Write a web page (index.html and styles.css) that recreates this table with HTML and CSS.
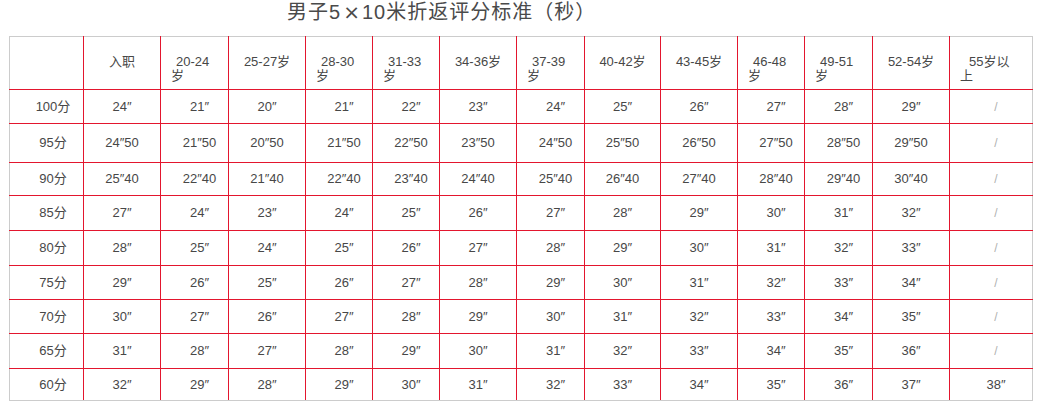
FILE: index.html
```html
<!DOCTYPE html>
<html lang="zh-CN">
<head>
<meta charset="utf-8">
<title>男子5×10米折返评分标准（秒）</title>
<link rel="stylesheet" href="styles.css">
</head>
<body>
<div class="page">
  <h1 class="title">男子5<span class="times">×</span>10米折返评分标准（秒）</h1>
  <table class="score">
    <colgroup>
      <col class="c74"><col class="c77"><col class="c68"><col class="c77"><col class="c67"><col class="c67"><col class="c77"><col class="c68"><col class="c76"><col class="c77"><col class="c67"><col class="c68"><col class="c77"><col class="c83">
    </colgroup>
    <thead>
      <tr class="hrow">
        <th class="lab"></th>
        <th>入职</th>
        <th class="w"><span class="ind">20-24</span><br>岁</th>
        <th>25-27岁</th>
        <th class="w"><span class="ind">28-30</span><br>岁</th>
        <th class="w"><span class="ind">31-33</span><br>岁</th>
        <th>34-36岁</th>
        <th class="w"><span class="ind">37-39</span><br>岁</th>
        <th>40-42岁</th>
        <th>43-45岁</th>
        <th class="w"><span class="ind">46-48</span><br>岁</th>
        <th class="w"><span class="ind">49-51</span><br>岁</th>
        <th>52-54岁</th>
        <th class="w last"><span class="ind wide">55岁以</span><br>上</th>
      </tr>
    </thead>
    <tbody>
      <tr class="r34">
        <td class="lab">100分</td><td>24″</td><td class="s">21″</td><td>20″</td><td class="s">21″</td><td class="s">22″</td><td>23″</td><td class="s">24″</td><td>25″</td><td>26″</td><td class="s">27″</td><td class="s">28″</td><td>29″</td><td class="s na">/</td>
      </tr>
      <tr class="r39">
        <td class="lab">95分</td><td>24″50</td><td class="s">21″50</td><td>20″50</td><td class="s">21″50</td><td class="s">22″50</td><td>23″50</td><td class="s">24″50</td><td>25″50</td><td>26″50</td><td class="s">27″50</td><td class="s">28″50</td><td>29″50</td><td class="s na">/</td>
      </tr>
      <tr class="r33">
        <td class="lab">90分</td><td>25″40</td><td class="s">22″40</td><td>21″40</td><td class="s">22″40</td><td class="s">23″40</td><td>24″40</td><td class="s">25″40</td><td>26″40</td><td>27″40</td><td class="s">28″40</td><td class="s">29″40</td><td>30″40</td><td class="s na">/</td>
      </tr>
      <tr class="r35">
        <td class="lab">85分</td><td>27″</td><td class="s">24″</td><td>23″</td><td class="s">24″</td><td class="s">25″</td><td>26″</td><td class="s">27″</td><td>28″</td><td>29″</td><td class="s">30″</td><td class="s">31″</td><td>32″</td><td class="s na">/</td>
      </tr>
      <tr class="r35">
        <td class="lab">80分</td><td>28″</td><td class="s">25″</td><td>24″</td><td class="s">25″</td><td class="s">26″</td><td>27″</td><td class="s">28″</td><td>29″</td><td>30″</td><td class="s">31″</td><td class="s">32″</td><td>33″</td><td class="s na">/</td>
      </tr>
      <tr class="r34">
        <td class="lab">75分</td><td>29″</td><td class="s">26″</td><td>25″</td><td class="s">26″</td><td class="s">27″</td><td>28″</td><td class="s">29″</td><td>30″</td><td>31″</td><td class="s">32″</td><td class="s">33″</td><td>34″</td><td class="s na">/</td>
      </tr>
      <tr class="r34">
        <td class="lab">70分</td><td>30″</td><td class="s">27″</td><td>26″</td><td class="s">27″</td><td class="s">28″</td><td>29″</td><td class="s">30″</td><td>31″</td><td>32″</td><td class="s">33″</td><td class="s">34″</td><td>35″</td><td class="s na">/</td>
      </tr>
      <tr class="r35">
        <td class="lab">65分</td><td>31″</td><td class="s">28″</td><td>27″</td><td class="s">28″</td><td class="s">29″</td><td>30″</td><td class="s">31″</td><td>32″</td><td>33″</td><td class="s">34″</td><td class="s">35″</td><td>36″</td><td class="s na">/</td>
      </tr>
      <tr class="r32">
        <td class="lab">60分</td><td>32″</td><td class="s">29″</td><td>28″</td><td class="s">29″</td><td class="s">30″</td><td>31″</td><td class="s">32″</td><td>33″</td><td>34″</td><td class="s">35″</td><td class="s">36″</td><td>37″</td><td class="s">38″</td>
      </tr>
    </tbody>
  </table>
</div>
</body>
</html>
```

FILE: styles.css
```css
html, body {
  margin: 0;
  padding: 0;
  background: #ffffff;
}

.page {
  padding: 0 0 0 9px;
  font-family: "Liberation Sans", "Noto Sans CJK SC", sans-serif;
  color: #474747;
}

.title {
  margin: 0 0 12px 0;
  padding: 0 0 0 278px;
  font-size: 20px;
  line-height: 24px;
  font-weight: normal;
  color: #4a4a4a;
  letter-spacing: 1px;
  white-space: nowrap;
  font-family: "Liberation Sans", "Noto Sans CJK SC", sans-serif;
}

.times {
  font-family: "DejaVu Sans", sans-serif;
  margin: 0 1px 0 2px;
}

.score {
  border-collapse: collapse;
  table-layout: fixed;
  width: 1024px;
  font-size: 13px;
}

.c74 { width: 74px; }
.c77 { width: 77px; }
.c68 { width: 68px; }
.c67 { width: 67px; }
.c76 { width: 76px; }
.c83 { width: 83px; }

.score th,
.score td {
  border: 1px solid #e3162e;
  padding: 0;
  text-align: center;
  font-weight: normal;
  color: #474747;
}

.score th {
  vertical-align: top;
  padding-top: 18px;
  line-height: 14px;
  border-top-color: #cccccc;
}

.score td {
  vertical-align: middle;
  line-height: 16px;
}

.score tr > :first-child {
  border-left-color: #cccccc;
}

.score tr > :last-child {
  border-right-color: #cccccc;
}

.score tbody tr:last-child td {
  border-bottom-color: #cccccc;
}

.hrow { height: 53px; }
.r32 { height: 32px; }
.r33 { height: 33px; }
.r34 { height: 34px; }
.r35 { height: 35px; }
.r39 { height: 39px; }

.score .lab {
  padding-left: 13px;
}

.score .s {
  padding-left: 10px;
}

.score th.w {
  text-align: left;
  padding-left: 10px;
}

.ind {
  padding-left: 5px;
}

.ind.wide {
  padding-left: 9px;
}

.score td.na {
  color: #b0b0b0;
  font-size: 12px;
}
```
